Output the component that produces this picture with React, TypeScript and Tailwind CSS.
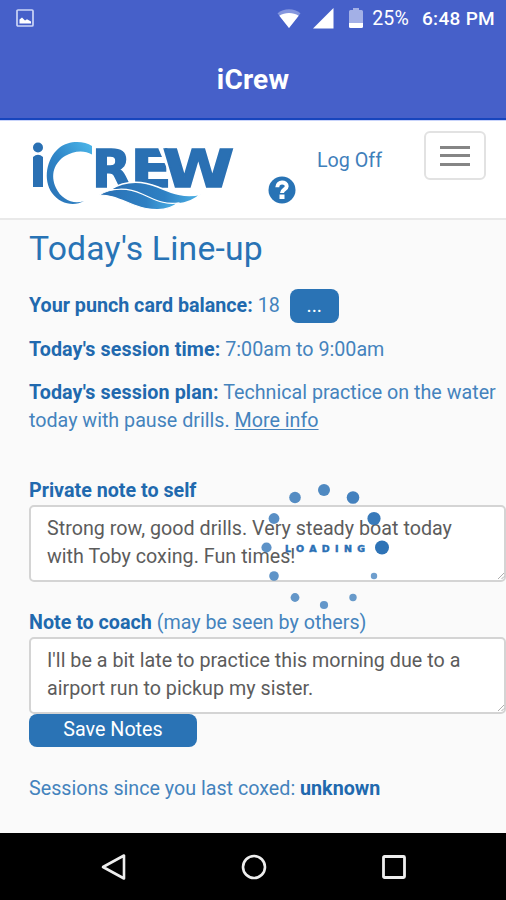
import React, { useState } from 'react';

const LOADER_DOTS = [
  { x: 61, y: 15, r: 6, opacity: 0.82 },
  { x: 90, y: 22.5, r: 6.3, opacity: 0.88 },
  { x: 111, y: 43.5, r: 6.6, opacity: 0.93 },
  { x: 119, y: 72.5, r: 7, opacity: 0.98 },
  { x: 111, y: 101, r: 3.2, opacity: 0.68 },
  { x: 90, y: 122.5, r: 3.7, opacity: 0.7 },
  { x: 61, y: 130, r: 4.1, opacity: 0.72 },
  { x: 32, y: 122.5, r: 4.4, opacity: 0.73 },
  { x: 11, y: 101, r: 4.8, opacity: 0.75 },
  { x: 3.5, y: 72.5, r: 5.1, opacity: 0.76 },
  { x: 11, y: 43.5, r: 5.4, opacity: 0.78 },
  { x: 32, y: 22.5, r: 5.8, opacity: 0.8 }
];

const StatusBar: React.FC = () => (
  <div className="flex h-[38px] items-center pl-4 pr-[11px] text-white">
    <svg width="18" height="18" viewBox="0 0 18 18" className="mb-[2px]">
      <rect x="1" y="1" width="16" height="16" rx="1" fill="none" stroke="#ccd5f6" strokeWidth="1.7" />
      <path d="M3.500 14.500V10.500L6 8.500L9 11.500L11 10.300L15 12.500V14.500Z" fill="#fff" />
    </svg>
    <svg width="24" height="20" viewBox="0 0 24 20" className="ml-auto mb-px">
      <path d="M12 19L0.500 4.200C7 -1 17 -1 23.500 4.200Z" fill="#8496de" />
      <path d="M12 19L2.300 6.700C8 3.200 16 3.200 21.700 6.700Z" fill="#fff" />
    </svg>
    <svg width="21" height="21" viewBox="0 0 21 21" className="ml-3 mb-px">
      <path d="M0 20.500L20.500 0V20.500Z" fill="#fff" />
    </svg>
    <svg width="14" height="20" viewBox="0 0 14 20" className="ml-[15px] mb-[2px]">
      <path d="M0 15V3.500Q0 2 1.500 2H4V0H10V2H12.500Q14 2 14 3.500V15Z" fill="#a3b0e6" />
      <path d="M0 15H14V18.500Q14 20 12.500 20H1.500Q0 20 0 18.500Z" fill="#fff" />
    </svg>
    <span className="ml-[9px] text-[19.500px] tracking-[0.2px]">25%</span>
    <span className="ml-[13px] text-[19px] font-medium tracking-[0.300px]">6:48 PM</span>
  </div>
);

const Logo: React.FC = () => (
  <svg width="212" height="80" viewBox="0 0 212 80" className="shrink-0">
    <defs>
      <linearGradient id="ring" x1="0" y1="1" x2="1" y2="0">
        <stop offset="0" stopColor="#2a70b4" />
        <stop offset="0.5" stopColor="#2f86c8" />
        <stop offset="1" stopColor="#4db8ea" />
      </linearGradient>
      <linearGradient id="wave" x1="0" y1="0" x2="1" y2="0">
        <stop offset="0" stopColor="#2a6fb3" />
        <stop offset="0.6" stopColor="#2e80c3" />
        <stop offset="1" stopColor="#4db4e8" />
      </linearGradient>
    </defs>
    <circle cx="10" cy="15.500" r="5" fill="#2a70b3" />
    <path d="M5 55V25Q10 20.500 15 25V55Z" fill="#2a70b3" />
    <path
      d="M64 22.500V14C56 9 41 8 31 16C18 27 15 48 24 61C32 72 46 75 56 69C45 73 33 67 28 56C22 43 26 31 37 24C45 19 56 17.500 64 22.500Z"
      fill="url(#ring)"
    />
    <g fill="#2a70b3" stroke="#2a70b3" strokeWidth="1.500" fontFamily="DejaVu Sans, sans-serif" fontWeight="700" fontSize="51">
      <text transform="translate(64 54.500) scale(1 1)">R</text>
      <text transform="translate(102.500 54.500) scale(1.180 1)">E</text>
      {/* gap between the E and the slanted W */}
      <path d="M133 15L151 57" stroke="#fff" strokeWidth="6" />
      <text transform="translate(134.500 54.500) scale(1.275 1)">W</text>
    </g>
    <path
      d="M82 57.500C96 49 113 48 130 55C146 62 158 66 173 62C160 74 140 75 122 67C106 60 96 57 82 57.500Z"
      fill="url(#wave)" stroke="#fff" strokeWidth="1.500"
    />
    <path
      d="M71 63C83 56 99 55 114 62C127 68 137 73 150 71C139 80 122 79 106 73C93 68 84 63 71 63Z"
      fill="url(#wave)" stroke="#fff" strokeWidth="1.200"
    />
  </svg>
);

const Navbar: React.FC = () => (
  <nav className="flex h-[100px] items-start border-b-2 border-t border-b-[#e9e9e9] border-t-[#c9d4fb] bg-white pl-7">
    <div className="pt-[11px]">
      <Logo />
    </div>
    <svg width="28" height="28" viewBox="0 0 28 28" className="ml-[28px] mt-[55px] shrink-0">
      <circle cx="14" cy="14" r="13.500" fill="#2873b5" />
      <path d="M9.300 11.200C9.300 4.800 18.700 5.200 18.700 10.200C18.700 13.500 14 13.200 14 17" fill="none" stroke="#fff" strokeWidth="4" />
      <rect x="11.500" y="18.500" width="5" height="4.500" fill="#fff" />
    </svg>
    <a className="ml-[21px] mt-[26px] w-[70px] whitespace-nowrap text-[19.700px] leading-7 text-[#3f80bb]">Log Off</a>
    <button className="ml-[37px] mt-[10px] flex h-[49px] w-[62px] flex-col items-center justify-center gap-[5.500px] rounded-md border-2 border-[#e2e2e2]">
      <span className="h-[3px] w-[30px] bg-[#858585]" />
      <span className="h-[3px] w-[30px] bg-[#858585]" />
      <span className="h-[3px] w-[30px] bg-[#858585]" />
    </button>
  </nav>
);

interface NoteFieldProps {
  value: string;
  onChange: (value: string) => void;
}

const NoteField: React.FC<NoteFieldProps> = ({ value, onChange }) => (
  <div className="relative h-[77px]">
    <textarea
      value={value}
      onChange={(e) => onChange(e.target.value)}
      className="block h-[77px] w-full resize-none overflow-hidden rounded-[5px] border-2 border-[#d4d4d4] bg-white px-4 py-[8px] text-[19.700px] leading-7 tracking-[0.020px] text-[#5c5c5c]"
    />
    <svg width="8" height="8" viewBox="0 0 8 8" className="absolute bottom-[2px] right-px">
      <path d="M1 7L7 1M4.500 7L7 4.500" stroke="#999" strokeWidth="0.800" />
    </svg>
  </div>
);

const Loader: React.FC = () => (
  <div className="pointer-events-none absolute left-[261px] top-[475px]">
    <svg width="132" height="140" viewBox="-2 0 132 140">
      {LOADER_DOTS.map((dot) => (
        <circle key={`${dot.x}-${dot.y}`} cx={dot.x} cy={dot.y} r={dot.r} fill="#2a70b5" fillOpacity={dot.opacity} />
      ))}
      <text
        x="22"
        y="76.500"
        textLength="80"
        fill="#2a70b5"
        stroke="#2a70b5"
        strokeWidth="0.500"
        fontFamily="DejaVu Sans, sans-serif"
        fontWeight="700"
        fontSize="9.500"
      >
        LOADING
      </text>
    </svg>
  </div>
);

export default function App() {
  const [privateNote, setPrivateNote] = useState(
    'Strong row, good drills. Very steady boat today with Toby coxing. Fun times!'
  );
  const [coachNote, setCoachNote] = useState(
    "I'll be a bit late to practice this morning due to a airport run to pickup my sister."
  );

  return (
    <div className="relative flex h-[900px] w-[506px] flex-col overflow-hidden bg-[#fafafa] font-['Roboto',sans-serif]">
      {/* App header */}
      <header className="h-[120px] shrink-0 border-b-2 border-[#1745bd] bg-[#4660c9]">
        <StatusBar />
        <h1 className="pt-[24px] text-center text-[28px] font-bold leading-9 tracking-[0.2px] text-white">iCrew</h1>
      </header>

      <Navbar />

      {/* Line-up */}
      <main className="grow pl-[29px] text-[19.700px] leading-7 text-[#4483bd]">
        <h2 className="pt-[9px] text-[33.700px] leading-10 tracking-[0.2px] text-[#2873b5]">Today's Line-up</h2>
        <div className="mt-5 flex h-[34px] items-center whitespace-pre">
          <b className="text-[#2169ae]">Your punch card balance:</b> 18
          <button className="ml-[10px] h-[34px] w-[49px] rounded-lg bg-[#2a73b5] text-white">...</button>
        </div>
        <p className="mt-[13px]">
          <b className="tracking-[0.120px] text-[#2169ae]">Today's session time:</b> 7:00am to 9:00am
        </p>
        <p className="mt-[15px] whitespace-nowrap">
          <b className="tracking-[0.120px] text-[#2169ae]">Today's session plan:</b> Technical practice on the water
          <br />
          today with pause drills. <a className="underline underline-offset-2">More info</a>
        </p>

        {/* Notes */}
        <div className="mt-[42px]">
          <b className="text-[#2169ae]">Private note to self</b>
        </div>
        <NoteField value={privateNote} onChange={setPrivateNote} />
        <div className="mt-[27px]">
          <b className="text-[#2169ae]">Note to coach</b> (may be seen by others)
        </div>
        <NoteField value={coachNote} onChange={setCoachNote} />
        <button className="block h-[33px] w-[168px] rounded-lg bg-[#2a73b5] pb-px text-white">Save Notes</button>
        <p className="mt-7">
          Sessions since you last coxed: <b className="text-[#2169ae]">unknown</b>
        </p>
      </main>

      {/* Android navigation */}
      <footer className="flex h-[67px] shrink-0 items-center justify-between bg-black pl-[101px] pr-[100px]">
        <svg width="25" height="28" viewBox="0 0 25 28">
          <path d="M2 14L23 2.500V25.500Z" fill="none" stroke="#eee" strokeWidth="2.600" strokeLinejoin="round" />
        </svg>
        <svg width="26" height="26" viewBox="0 0 26 26">
          <circle cx="13" cy="13" r="11" fill="none" stroke="#eee" strokeWidth="2.600" />
        </svg>
        <svg width="24" height="24" viewBox="0 0 24 24">
          <rect x="1.500" y="1.500" width="21" height="21" rx="1" fill="none" stroke="#eee" strokeWidth="2.800" />
        </svg>
      </footer>

      <Loader />
    </div>
  );
}
